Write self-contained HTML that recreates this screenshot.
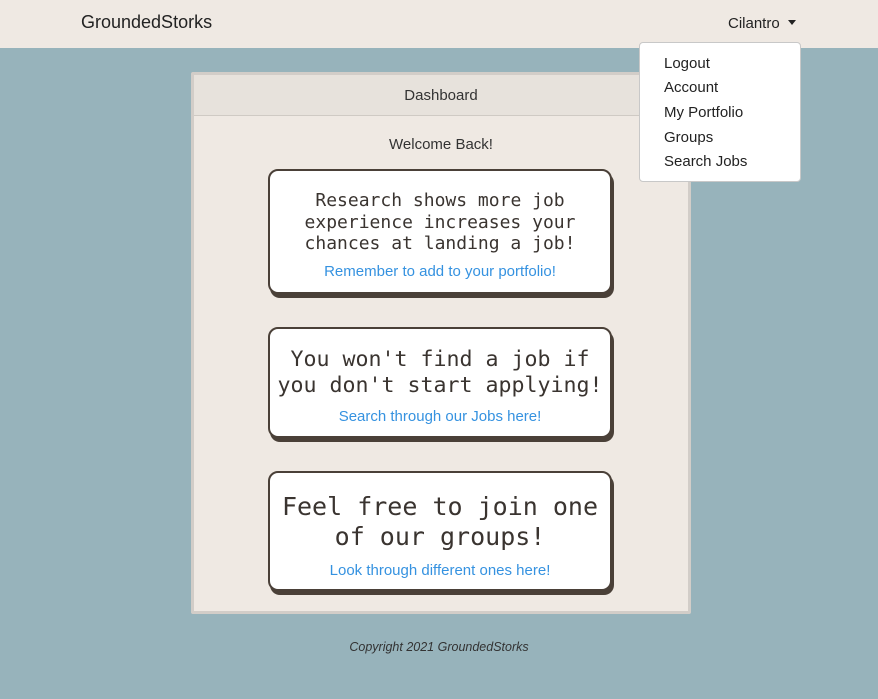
<!DOCTYPE html>
<html><head><style>
body{margin:0;width:878px;height:699px;background:#97b3bb;font-family:"Liberation Sans",Arial,Helvetica,sans-serif;position:relative;overflow:hidden;color:#333}
.nav{position:absolute;left:0;top:0;width:878px;height:48px;background:#efe9e3}
.brand{position:absolute;left:81px;top:12px;font-size:18px;color:#222}
.user{position:absolute;left:728px;top:15px;font-size:15px;color:#222}
.caret{display:inline-block;margin-left:8px;border-left:4.5px solid transparent;border-right:4.5px solid transparent;border-top:5px solid #222;vertical-align:3px}
.dd{position:absolute;left:639px;top:42px;width:160px;height:138px;background:#fff;border:1px solid #c8c8c8;border-radius:4px;z-index:5}
.dd div{position:absolute;left:24px;font-size:15px;color:#222}
.panel{position:absolute;left:191px;top:72px;width:494px;height:536px;border:3px solid #d2cdc8;background:#efe9e3;border-radius:2px}
.ph{height:40px;background:#e7e2dc;border-bottom:1px solid #cfcac4;text-align:center;line-height:42px;font-size:15px;color:#333}
.wel{position:absolute;left:0;width:494px;top:61px;text-align:center;font-size:15px;color:#333}
.card{position:absolute;left:74px;width:344px;background:#fff;border:2px solid #4a4038;border-radius:10px;box-shadow:2px 4px 0 #4a4038;text-align:center;box-sizing:border-box}
.m{font-family:"DejaVu Sans Mono",monospace;color:#3a3430}
.l{color:#3592e0;font-size:15px}
.foot{position:absolute;left:0;width:878px;top:640px;text-align:center;font-size:12.5px;font-style:italic;color:#333}
</style></head><body>
<div class="nav"><div class="brand">GroundedStorks</div><div class="user">Cilantro<span class="caret"></span></div></div>
<div class="dd"><div style="top:12px">Logout</div><div style="top:36px">Account</div><div style="top:61px">My Portfolio</div><div style="top:86px">Groups</div><div style="top:110px">Search Jobs</div></div>
<div class="panel">
<div class="ph">Dashboard</div>
<div class="wel">Welcome Back!</div>
<div class="card" style="top:94px;height:125px"><div class="m" style="font-size:18px;line-height:21.5px;margin-top:19px">Research shows more job<br>experience increases your<br>chances at landing a job!</div><div class="l" style="margin-top:8px">Remember to add to your portfolio!</div></div>
<div class="card" style="top:252px;height:111px"><div class="m" style="font-size:21.6px;line-height:26px;margin-top:18px">You won't find a job if<br>you don't start applying!</div><div class="l" style="margin-top:9px">Search through our Jobs here!</div></div>
<div class="card" style="top:396px;height:120px"><div class="m" style="font-size:25px;line-height:30px;margin-top:19px">Feel free to join one<br>of our groups!</div><div class="l" style="margin-top:10px">Look through different ones here!</div></div>
</div>
<div class="foot">Copyright 2021 GroundedStorks</div>
</body></html>
